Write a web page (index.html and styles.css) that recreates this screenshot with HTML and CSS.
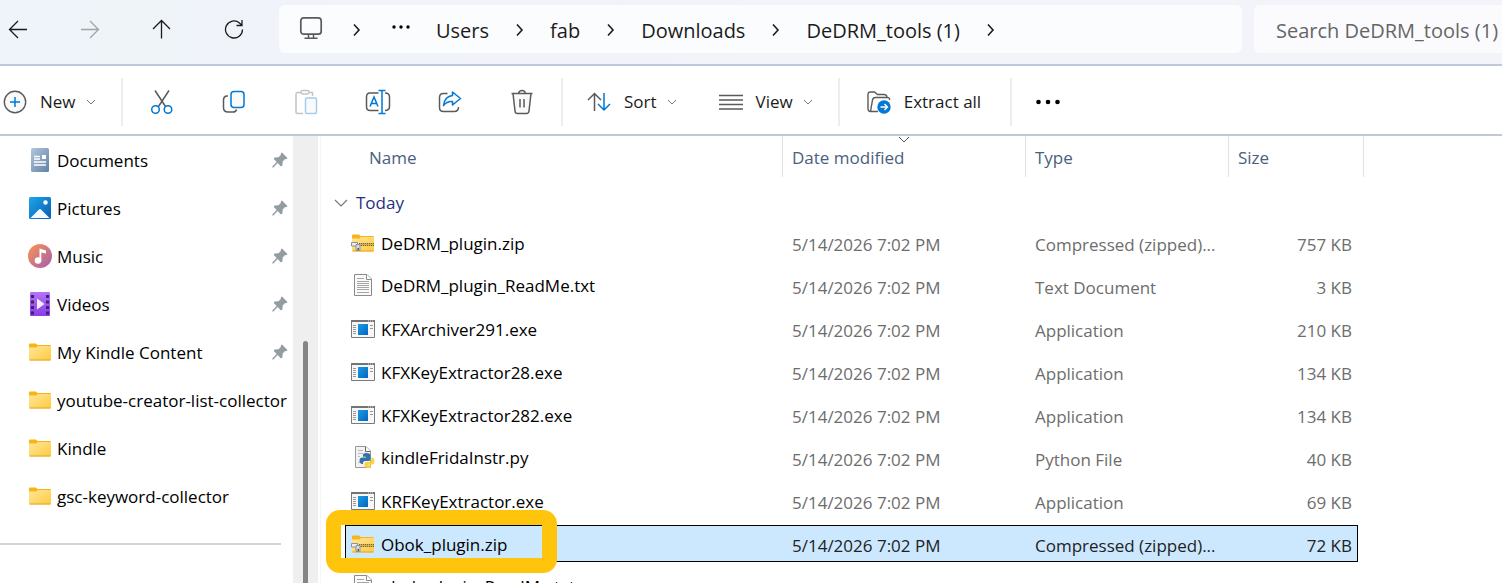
FILE: index.html
```html
<!DOCTYPE html>
<html lang="en">
<head>
    <meta charset="UTF-8">
    <meta name="viewport" content="width=device-width, initial-scale=1.0">
    <title>DeDRM_tools (1)</title>
    <link rel="stylesheet" href="styles.css">
</head>
<body>
    <!-- Shared icons -->
    <svg class="defs" width="0" height="0" aria-hidden="true">
        <defs>
            <linearGradient id="gFolder" x1="0" y1="0" x2="1" y2="1">
                <stop offset="0" stop-color="#ffe69c"/>
                <stop offset="1" stop-color="#fecb3e"/>
            </linearGradient>
            <linearGradient id="gDoc" x1="0" y1="0" x2="1" y2="1">
                <stop offset="0" stop-color="#b3c6dc"/>
                <stop offset="1" stop-color="#5f82a6"/>
            </linearGradient>
            <linearGradient id="gPic" x1="0" y1="0" x2="1" y2="1">
                <stop offset="0" stop-color="#1ca7e8"/>
                <stop offset="1" stop-color="#0a5cb4"/>
            </linearGradient>
            <linearGradient id="gMusic" x1="0" y1="0" x2="1" y2="1">
                <stop offset="0.1" stop-color="#f39156"/>
                <stop offset="1" stop-color="#a35cb0"/>
            </linearGradient>
            <linearGradient id="gVideo" x1="0" y1="0" x2="0" y2="1">
                <stop offset="0" stop-color="#b574f5"/>
                <stop offset="1" stop-color="#8a3de8"/>
            </linearGradient>
            <linearGradient id="gExe" x1="0" y1="0" x2="1" y2="1">
                <stop offset="0" stop-color="#1a9be6"/>
                <stop offset="1" stop-color="#0566c0"/>
            </linearGradient>
        </defs>
        <symbol id="chevRight" viewBox="0 0 12 16">
            <path d="M3 2.5l5 5.5-5 5.5" fill="none" stroke="#1b1b1b" stroke-width="1.6"/>
        </symbol>
        <symbol id="chevDown" viewBox="0 0 10 6">
            <path d="M1 1l4 4 4-4" fill="none" stroke="#777" stroke-width="1"/>
        </symbol>
        <symbol id="pin" viewBox="0 0 16 16">
            <path d="M10 .5L15.500 6l-.8 1.100-1.900.2-2.100 2.300-.3 3.900-1.400.9-3.300-3.300-4.300 4.400-1-.1-.1-1 4.400-4.300L1.700 6.900l.9-1.400 3.800-.3 2.400-2.100.1-1.800z" fill="#929ca3"/>
        </symbol>
        <symbol id="folder" viewBox="0 0 22 18">
            <path d="M0 1.500Q0 .500 1 .5H7L8.500 2H21Q22 2 22 3V9H0z" fill="#f7b41b"/>
            <path d="M0 4.500H7.500L9 3H22V16.500Q22 17.500 21 17.500H1Q0 17.500 0 16.500z" fill="url(#gFolder)"/>
            <path d="M.5 17H21.500" stroke="#e7a41e"/>
        </symbol>
        <symbol id="zip" viewBox="0 0 24 18">
            <path d="M1 1.500Q1 .500 2 .500H8L9.500 2H22Q23 2 23 3V9H1z" fill="#f7b41b"/>
            <path d="M1 4.500H8.500L10 3H23V16.500Q23 17.500 22 17.500H2Q1 17.500 1 16.500z" fill="url(#gFolder)"/>
            <path d="M1.500 17H22.500" stroke="#e7a41e"/>
            <path d="M8 9H23V12H8z" fill="#d8b04a"/>
            <path d="M8 9.500H23M8 11.500H23" stroke="#6b6350" stroke-dasharray="1 1"/>
            <path d="M.5 8.500H6.500V12H.5z" fill="#eee" stroke="#8d949b"/>
            <path d="M5 10.500H9V16.500H5z" fill="#d7dadd" stroke="#8d949b"/>
            <path d="M6.500 14H8V16H6.500z" fill="#555"/>
        </symbol>
        <symbol id="txt" viewBox="0 0 24 24">
            <path d="M3.500 1.500H16L20.500 6V22.500H3.500z" fill="#fafafa" stroke="#8b8b8b"/>
            <path d="M15.500 1.500V6.500H20.500" fill="#fff" stroke="#8b8b8b"/>
            <path d="M6 5.500H13M6 8.500H18M6 10.500H18M6 12.500H18M6 14.500H18M6 16.500H18M6 19.500H18" stroke="#a5a5a5"/>
        </symbol>
        <symbol id="exe" viewBox="0 0 24 18">
            <path d="M.5 .5H23.500V17.500H.5z" fill="#f7f7f7" stroke="#7b7b7b"/>
            <path d="M0 0H24V2H0z" fill="#747474"/>
            <path d="M17 1H18M19 1H20M21 1H22" stroke="#ddd"/>
            <path d="M2 5.500H5M2 7.500H5M2 9.500H5M2 11.500H5M2 13.500H5M19 5.500H22M19 8.500H22" stroke="#999"/>
            <path d="M7 4H17V15H7z" fill="url(#gExe)"/>
        </symbol>
        <symbol id="py" viewBox="0 0 24 24">
            <path d="M4.500 1.500H15L19.500 6V22.500H4.500z" fill="#f2f2f2" stroke="#9a9a9a"/>
            <path d="M14.500 1.500V6.500H19.500" fill="#fff" stroke="#666"/>
            <path d="M7 5.500H12M7 8.500H12M7 11.500H9M7 17.500H9" stroke="#bbb"/>
            <path d="M12 10Q12 8 15.500 8T19.500 10V14Q19.500 16 17.500 16H14Q12 16 12 18V19H11Q8.500 18.500 8.500 15.500T11.500 12.500H15V11.800H12z" fill="#3671a4"/>
            <path d="M20 21Q20 23 17 23T13.500 21V18.500Q13.500 17 15 17H18Q20.500 17 20.500 14.500V12.500H21.500Q23.500 13 23.500 16T21 19.500H17V20H20z" fill="#fbd144"/>
        </symbol>
    </svg>

    <div class="explorer">
        <header class="topbar">
            <button type="button" class="nav-btn back" aria-label="Back">
                <svg width="20" height="20" viewBox="0 0 20 20"><path d="M19 10.500H1.500M10 2L1.500 10.500 10 19" fill="none" stroke="#1b1b1b" stroke-width="1.300"/></svg>
            </button>
            <button type="button" class="nav-btn" aria-label="Forward" disabled>
                <svg width="20" height="20" viewBox="0 0 20 20"><path d="M1 10.500H18.500M10 2L18.500 10.500 10 19" fill="none" stroke="#a0a4a8" stroke-width="1.300"/></svg>
            </button>
            <button type="button" class="nav-btn" aria-label="Up">
                <svg width="20" height="20" viewBox="0 0 20 20"><path d="M9.500 19.500V1.500M1 10L9.500 1.500 18 10" fill="none" stroke="#1b1b1b" stroke-width="1.300"/></svg>
            </button>
            <button type="button" class="nav-btn" aria-label="Refresh">
                <svg width="20" height="20" viewBox="0 0 20 20"><path d="M18.500 10.500A8.500 8.500 0 1 1 15.500 4L18 6.500M18 1V6.500H12.500" fill="none" stroke="#1b1b1b" stroke-width="1.300"/></svg>
            </button>

            <nav class="address" aria-label="Address">
                <svg class="pc" width="24" height="24" viewBox="0 0 24 24"><rect x="1.800" y="1.800" width="20.400" height="16.400" rx="3" fill="none" stroke="#5a5a5a" stroke-width="1.700"/><path d="M9.500 18.500V22M14.500 18.500V22M5.500 22.200H18.500" fill="none" stroke="#5a5a5a" stroke-width="1.500"/></svg>
                <svg class="sep" width="12" height="16"><use href="#chevRight"/></svg>
                <button type="button" class="more" aria-label="More locations"><svg width="18" height="4" viewBox="0 0 18 4"><circle cx="2" cy="2" r="1.700"/><circle cx="9" cy="2" r="1.700"/><circle cx="16" cy="2" r="1.700"/></svg></button>
                <a href="#">Users</a>
                <svg class="sep" width="12" height="16"><use href="#chevRight"/></svg>
                <a href="#">fab</a>
                <svg class="sep" width="12" height="16"><use href="#chevRight"/></svg>
                <a href="#">Downloads</a>
                <svg class="sep" width="12" height="16"><use href="#chevRight"/></svg>
                <a href="#">DeDRM_tools (1)</a>
                <svg class="sep" width="12" height="16"><use href="#chevRight"/></svg>
            </nav>
            <input type="text" class="search" placeholder="Search DeDRM_tools (1)" aria-label="Search DeDRM_tools (1)">
        </header>

        <div class="toolbar">
            <div class="group group-new">
                <button type="button" class="tool">
                    <svg width="24" height="24" viewBox="0 0 24 24" fill="none"><circle cx="12" cy="12" r="10.700" fill="#fafafa" stroke="#5a5a5a" stroke-width="1.400"/><path d="M12 7V17M7 12H17" stroke="#0078d4" stroke-width="1.500"/></svg>
                    <span>New</span>
                    <svg class="chev" width="10" height="6"><use href="#chevDown"/></svg>
                </button>
            </div>
            <div class="group group-edit">
                <button type="button" class="tool" aria-label="Cut">
                    <svg width="24" height="26" viewBox="0 0 24 26" fill="none" stroke-width="1.500"><path d="M5 1.500L15.500 17.500M19 1.500L8.500 17.500" stroke="#5a5a5a"/><circle cx="5.500" cy="20.500" r="3.800" stroke="#0078d4"/><circle cx="18" cy="20.500" r="3.800" stroke="#0078d4"/></svg>
                </button>
                <button type="button" class="tool" aria-label="Copy">
                    <svg width="24" height="24" viewBox="0 0 24 24" fill="none" stroke-width="1.500"><path d="M6 6H4.500Q1.500 6.500 1.500 10V17.500Q1.500 22 6 22H11Q14 22 14.500 19.500" stroke="#5a5a5a"/><rect x="9" y="1.500" width="13" height="16" rx="3" fill="#fafafa" stroke="#0078d4"/></svg>
                </button>
                <button type="button" class="tool" aria-label="Paste" disabled>
                    <svg width="24" height="26" viewBox="0 0 24 26" fill="none" stroke-width="1.500"><path d="M7 3.500H3.500Q2 3.500 2 5V23Q2 24.500 3.500 24.500H9M15 3.500H18.500V7" stroke="#c4c4c4"/><rect x="7" y="1.500" width="8" height="3.500" rx="1.700" stroke="#c4c4c4"/><rect x="11.500" y="9" width="11" height="15.500" rx="1.500" fill="#fafafa" stroke="#a3cdf0"/></svg>
                </button>
                <button type="button" class="tool" aria-label="Rename">
                    <svg width="26" height="26" viewBox="0 0 26 26" fill="none" stroke-width="1.500"><path d="M13.500 4H5Q1.500 4 1.500 8V17.500Q1.500 21.500 5 21.500H13.500M20 4Q24.500 4 24.500 8V17.500Q24.500 21.500 20 21.500" stroke="#5a5a5a"/><path d="M5 17.500L9 8 13 17.500M6.500 14.500H11.500M17 2V24M13.500 1.500H20.500M13.500 24.500H20.500" stroke="#0078d4"/></svg>
                </button>
                <button type="button" class="tool" aria-label="Share">
                    <svg width="24" height="24" viewBox="0 0 24 24" fill="none" stroke-width="1.500"><path d="M9.500 3.500H5.500Q1.500 3.500 1.500 7.500V17.500Q1.500 21.500 5.500 21.500H16Q20.500 21.500 20.500 17" stroke="#5a5a5a"/><path d="M14.500 2L22.500 8.500 14.500 15V11.500Q9 11 5.500 15.500 6.500 6.500 14.500 5.500z" fill="#fafafa" stroke="#0078d4" stroke-linejoin="round"/></svg>
                </button>
                <button type="button" class="tool" aria-label="Delete">
                    <svg width="24" height="26" viewBox="0 0 24 26" fill="none" stroke="#5a5a5a" stroke-width="1.500"><path d="M3 4.500L5 22Q5.300 24.500 7.500 24.500H16.500Q18.700 24.500 19 22L21 4.500" fill="#fafafa"/><path d="M1.500 4.500H22.500M8.500 4.500Q9 1.500 12 1.500T15.500 4.500M10 10V18.500M14 10V18.500"/></svg>
                </button>
            </div>
            <div class="group group-view">
                <button type="button" class="tool">
                    <svg width="24" height="20" viewBox="0 0 24 20" fill="none" stroke-width="1.500"><path d="M7.500 19V2M1 8L7.500 1.500 14 8" stroke="#5a5a5a"/><path d="M17 1V18M11 12L17 18 23 12" stroke="#0078d4"/></svg>
                    <span>Sort</span>
                    <svg class="chev" width="10" height="6"><use href="#chevDown"/></svg>
                </button>
                <button type="button" class="tool">
                    <svg width="24" height="16" viewBox="0 0 24 16"><path d="M0 1.500H24M0 6H24M0 10.500H24M0 15H24" stroke="#5a5a5a" stroke-width="1.300"/></svg>
                    <span>View</span>
                    <svg class="chev" width="10" height="6"><use href="#chevDown"/></svg>
                </button>
            </div>
            <div class="group group-extract">
                <button type="button" class="tool">
                    <svg width="24" height="24" viewBox="0 0 24 24" fill="none" stroke="#5a5a5a" stroke-width="1.400"><path d="M3.500 21.500Q1 21.500 1 18.500V4.500Q1 2 3.500 2H7.500L10.500 4.500H17Q20 4.500 20 7.500M3.500 21.500L5.500 10Q6 7.500 8.500 7.500H20Q23 7.500 22.500 10M3.500 21.500H11"/><circle cx="17" cy="17" r="6.700" fill="#0078d4" stroke="none"/><path d="M13.500 17H20M17.500 14L20.500 17 17.500 20" stroke="#fff"/></svg>
                    <span>Extract all</span>
                </button>
            </div>
            <div class="group group-more">
                <button type="button" class="tool" aria-label="See more">
                    <svg width="24" height="6" viewBox="0 0 24 6"><circle cx="2.500" cy="3" r="2.300"/><circle cx="12" cy="3" r="2.300"/><circle cx="21.500" cy="3" r="2.300"/></svg>
                </button>
            </div>
        </div>

        <div class="panes">
            <aside class="sidebar">
                <ul>
                    <li><a href="#"><svg width="24" height="24" viewBox="0 0 24 24"><rect x="3" y="0" width="18" height="24" rx="1.500" fill="url(#gDoc)"/><path d="M6 8.500H12M6 11H12M6 14H18M6 17H18" stroke="#fff" stroke-width="1.300"/><path d="M14 7H18V11H14z" fill="#fff"/></svg><span>Documents</span></a><svg class="pin" width="16" height="16"><use href="#pin"/></svg></li>
                    <li><a href="#"><svg width="24" height="24" viewBox="0 0 24 24"><rect x="1" y="1" width="22" height="22" rx="1.500" fill="url(#gPic)"/><path d="M2.500 22L11 13.500Q12 12.500 13 13.500L21.500 22z" fill="#f3f8fc"/><circle cx="17.500" cy="6.500" r="2.200" fill="#fff"/></svg><span>Pictures</span></a><svg class="pin" width="16" height="16"><use href="#pin"/></svg></li>
                    <li><a href="#"><svg width="24" height="24" viewBox="0 0 24 24"><circle cx="12" cy="12" r="12" fill="url(#gMusic)"/><circle cx="10" cy="16.500" r="3.300" fill="#fff"/><path d="M11.500 4.500L18 6.500V9.500L13.300 8.500V17H11.500z" fill="#fff"/></svg><span>Music</span></a><svg class="pin" width="16" height="16"><use href="#pin"/></svg></li>
                    <li><a href="#"><svg width="24" height="24" viewBox="0 0 24 24"><rect x="2" y="0" width="20" height="24" rx="1" fill="url(#gVideo)"/><path d="M4.500 3V23M19.500 3V23" stroke="#43206f" stroke-width="3" stroke-dasharray="3 2.500"/><path d="M9 6.500L16.500 12 9 17.500z" fill="#f5f0fb"/></svg><span>Videos</span></a><svg class="pin" width="16" height="16"><use href="#pin"/></svg></li>
                    <li><a href="#"><svg width="24" height="18"><use href="#folder"/></svg><span>My Kindle Content</span></a><svg class="pin" width="16" height="16"><use href="#pin"/></svg></li>
                    <li><a href="#"><svg width="24" height="18"><use href="#folder"/></svg><span>youtube-creator-list-collector</span></a></li>
                    <li><a href="#"><svg width="24" height="18"><use href="#folder"/></svg><span>Kindle</span></a></li>
                    <li><a href="#"><svg width="24" height="18"><use href="#folder"/></svg><span>gsc-keyword-collector</span></a></li>
                </ul>
                <hr>
            </aside>
            <div class="scrollbar"><div class="thumb"></div></div>

            <main class="files">
                <table>
                    <colgroup>
                        <col>
                        <col class="col-date">
                        <col class="col-type">
                        <col class="col-size">
                        <col class="col-edge">
                    </colgroup>
                    <thead>
                        <tr>
                            <th scope="col" class="name">Name</th>
                            <th scope="col" class="sorted">Date modified<svg width="12" height="7" viewBox="0 0 12 7"><path d="M1 1l5 5 5-5" fill="none" stroke="#555"/></svg></th>
                            <th scope="col">Type</th>
                            <th scope="col" colspan="2">Size</th>
                        </tr>
                    </thead>
                    <tbody>
                        <tr class="day">
                            <th scope="rowgroup" colspan="5"><button type="button"><svg width="14" height="8" viewBox="0 0 14 8"><path d="M1 1l6 6 6-6" fill="none" stroke="#777" stroke-width="1.200"/></svg>Today</button></th>
                        </tr>
                        <tr>
                            <td class="name"><svg width="24" height="18"><use href="#zip"/></svg>DeDRM_plugin.zip</td>
                            <td>5/14/2026 7:02 PM</td>
                            <td>Compressed (zipped)...</td>
                            <td class="size">757 KB</td>
                        </tr>
                        <tr>
                            <td class="name"><svg width="24" height="24"><use href="#txt"/></svg>DeDRM_plugin_ReadMe.txt</td>
                            <td>5/14/2026 7:02 PM</td>
                            <td>Text Document</td>
                            <td class="size">3 KB</td>
                        </tr>
                        <tr>
                            <td class="name"><svg width="24" height="18"><use href="#exe"/></svg>KFXArchiver291.exe</td>
                            <td>5/14/2026 7:02 PM</td>
                            <td>Application</td>
                            <td class="size">210 KB</td>
                        </tr>
                        <tr>
                            <td class="name"><svg width="24" height="18"><use href="#exe"/></svg>KFXKeyExtractor28.exe</td>
                            <td>5/14/2026 7:02 PM</td>
                            <td>Application</td>
                            <td class="size">134 KB</td>
                        </tr>
                        <tr>
                            <td class="name"><svg width="24" height="18"><use href="#exe"/></svg>KFXKeyExtractor282.exe</td>
                            <td>5/14/2026 7:02 PM</td>
                            <td>Application</td>
                            <td class="size">134 KB</td>
                        </tr>
                        <tr>
                            <td class="name"><svg width="24" height="24"><use href="#py"/></svg>kindleFridaInstr.py</td>
                            <td>5/14/2026 7:02 PM</td>
                            <td>Python File</td>
                            <td class="size">40 KB</td>
                        </tr>
                        <tr>
                            <td class="name"><svg width="24" height="18"><use href="#exe"/></svg>KRFKeyExtractor.exe</td>
                            <td>5/14/2026 7:02 PM</td>
                            <td>Application</td>
                            <td class="size">69 KB</td>
                        </tr>
                        <tr class="selected">
                            <td class="name"><svg width="24" height="18"><use href="#zip"/></svg>Obok_plugin.zip<span class="marker"></span></td>
                            <td>5/14/2026 7:02 PM</td>
                            <td>Compressed (zipped)...</td>
                            <td class="size">72 KB</td>
                        </tr>
                        <tr>
                            <td class="name"><svg width="24" height="24"><use href="#txt"/></svg>obok_plugin_ReadMe.txt</td>
                            <td>5/14/2026 7:02 PM</td>
                            <td>Text Document</td>
                            <td class="size">3 KB</td>
                        </tr>
                    </tbody>
                </table>
            </main>
        </div>
    </div>
</body>
</html>
```
FILE: styles.css
```css
* {
    box-sizing: border-box;
}
body {
    margin: 0;
    font-family: "Segoe UI", "Open Sans", "Noto Sans", sans-serif;
    font-size: 17px;
    color: #1b1b1b;
    background: #fff;
}
button {
    font: inherit;
    color: inherit;
    background: none;
    border: none;
    padding: 0;
}
a {
    color: inherit;
    text-decoration: none;
}
svg {
    flex: none;
}
.defs {
    position: absolute;
}
.explorer {
    display: flex;
    flex-direction: column;
    height: 100vh;
    overflow: hidden;
}

/* Top bar */
.topbar {
    display: flex;
    align-items: center;
    flex: none;
    height: 66px;
    padding: 5px 0 11px;
    background: linear-gradient(90deg, #eef4f9, #f3f3fa 50%);
    border-bottom: 2px solid #c2c8dc;
}
.nav-btn {
    display: flex;
    justify-content: center;
    flex: none;
    width: 72px;
}
.back {
    width: 54px;
    padding-right: 18px;
}
.address {
    display: flex;
    align-items: center;
    flex: 1;
    height: 48px;
    margin: 0 12px 0 9px;
    padding: 2px 0 0 20px;
    background: #fbfcfe;
    border-radius: 6px;
    font-size: 20px;
    white-space: nowrap;
}
.address a {
    margin: 0 25px 0 24px;
}
.pc {
    margin: 0 28px 4px 0;
}
.more {
    display: flex;
    margin: 0 2px 6px 29px;
}
.search {
    flex: none;
    width: 248px;
    height: 48px;
    padding: 2px 0 0 22px;
    border: none;
    border-radius: 6px 0 0 6px;
    background: #fbfbfe;
    font: inherit;
    font-size: 20px;
}
.search::placeholder {
    color: #666;
    opacity: 1;
}

/* Toolbar */
.toolbar {
    display: flex;
    align-items: center;
    flex: none;
    height: 70px;
    padding-top: 3px;
    border-bottom: 2px solid #c2c8dc;
}
.group {
    display: flex;
    align-items: center;
    height: 48px;
    border-right: 2px solid #ededed;
}
.tool {
    display: flex;
    align-items: center;
    justify-content: center;
}
.tool span {
    margin-left: 13px;
}
.tool .chev {
    margin-left: 10px;
}
.group-new {
    width: 123px;
    padding-left: 3px;
}
.group-edit {
    padding: 0 3px;
}
.group-edit .tool {
    width: 72px;
}
.group-view {
    gap: 42px;
    padding: 0 25px 0 24px;
}
.group-extract {
    padding: 0 29px 0 27px;
}
.group-more {
    border: none;
    padding-left: 24px;
}

/* Panes */
.panes {
    display: flex;
    flex: 1;
    min-height: 0;
}
.sidebar {
    flex: none;
    width: 293px;
    overflow: hidden;
    color: #000;
}
.sidebar ul {
    list-style: none;
    margin: 0;
    padding: 0 5px 0 28px;
}
.sidebar li,
.sidebar a {
    display: flex;
    align-items: center;
    height: 48px;
    white-space: nowrap;
}
.sidebar a {
    gap: 5px;
}
.pin {
    margin-left: auto;
}
.sidebar hr {
    margin: 23px 12px 0 0;
    border: none;
    border-top: 2px solid #d4d4d4;
}
.scrollbar {
    flex: none;
    width: 28px;
    padding: 205px 10px 0;
    background: linear-gradient(90deg, #efefef 25px, #fff 25px 27px, #f5f5f5 27px);
}
.thumb {
    width: 5px;
    height: 100%;
    border-radius: 3px 3px 0 0;
    background: #858585;
}

/* File list */
.files {
    flex: 1;
    min-width: 0;
    padding: 0 138px 0 24px;
}
table {
    width: 100%;
    margin-top: -6px;
    table-layout: fixed;
    border-collapse: separate;
    border-spacing: 0 6px;
    color: #6d6d6d;
}
.col-date {
    width: 243px;
}
.col-type {
    width: 203px;
}
.col-size {
    width: 129px;
}
.col-edge {
    width: 6px;
}
th,
td {
    padding: 2px 9px 0;
    text-align: left;
    font-weight: normal;
    white-space: nowrap;
}
thead th {
    height: 41px;
    border-right: 1px solid #e2e2e2;
    color: #4a607c;
}
thead .name {
    padding-left: 24px;
}
.sorted {
    position: relative;
}
.sorted svg {
    position: absolute;
    top: 0;
    left: calc(50% - 6px);
}
td {
    height: 37px;
    padding-top: 3px;
}
td.name {
    position: relative;
    padding-left: 6px;
    color: #000;
}
td.name svg {
    margin: 0 6px 4px 0;
    vertical-align: middle;
}
td.size {
    padding-right: 6px;
    text-align: right;
}
.day th {
    height: 35px;
    padding: 4px 0 0;
    color: #1f3282;
}
.day button {
    display: flex;
    align-items: center;
    gap: 8px;
    margin-left: -11px;
}
.selected td {
    background: #cce8ff;
    border: 1px solid #000;
    border-width: 1px 0;
    color: #222;
}
.selected .name {
    padding-left: 5px;
    border-left-width: 1px;
    color: #000;
}
.selected .size {
    padding-right: 5px;
    border-right-width: 1px;
}
/* Highlight drawn round the file name */
.marker {
    position: absolute;
    top: -16px;
    left: -20px;
    width: 231px;
    height: 63px;
    border: 15px solid #ffc40c;
    border-radius: 14px;
}
```
